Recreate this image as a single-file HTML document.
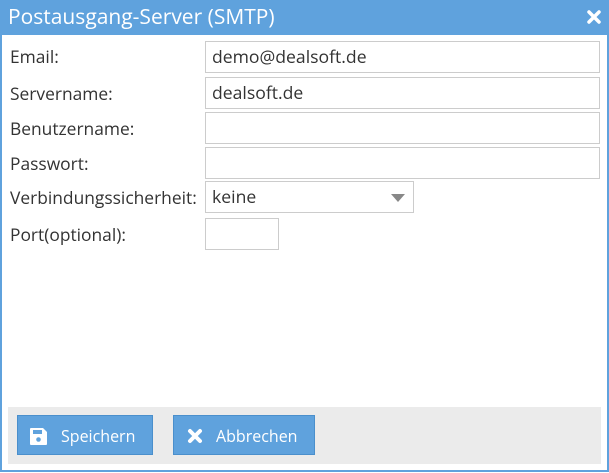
<!DOCTYPE html>
<html><head><style>
body{margin:0;width:609px;height:473px;overflow:hidden;font-family:"Open Sans","Liberation Sans",sans-serif;background:#fff}
.win{position:absolute;left:0;top:0;width:605px;height:470px;border:2px solid #5fa2dd;border-top:0;background:#fff}
.hd{position:absolute;left:0;top:0;width:609px;height:35px;background:#5fa2dd;color:#fff;font-size:21px;line-height:35px}
.hd span{position:absolute;left:8px;top:0}
.x{position:absolute;right:7px;top:9px}
.lb{position:absolute;left:10px;font-size:17.4px;color:#333}
.in{position:absolute;left:205px;width:393px;height:30px;border:1px solid #ccc;box-sizing:content-box;font-size:17.6px;color:#333;line-height:30px;text-indent:6px}
.ft{position:absolute;left:8px;top:407px;width:593px;height:57px;background:#ebebeb}
.bt{position:absolute;top:415px;height:40px;background:#5fa2dd;border:1px solid #4a8fcc;color:#fff;font-size:16px;line-height:40px;box-sizing:border-box}
</style></head><body>
<div class="win"></div>
<div class="hd"><span>Postausgang-Server (SMTP)</span>
<svg class="x" width="16" height="16" viewBox="0 0 16 16"><path d="M3 3L13 13M13 3L3 13" stroke="#fff" stroke-width="3.5" stroke-linecap="round"/></svg></div>
<div class="lb" style="top:45px">Email:</div><div class="in" style="top:41px">demo@dealsoft.de</div>
<div class="lb" style="top:82px">Servername:</div><div class="in" style="top:77px">dealsoft.de</div>
<div class="lb" style="top:117px">Benutzername:</div><div class="in" style="top:112px"></div>
<div class="lb" style="top:152px">Passwort:</div><div class="in" style="top:147px"></div>
<div class="lb" style="top:186px">Verbindungssicherheit:</div><div class="in" style="top:181px;width:207px">keine
<svg style="position:absolute;right:8px;top:12px" width="14" height="8"><path d="M0 0H14L7 8Z" fill="#888"/></svg></div>
<div class="lb" style="top:223px">Port(optional):</div><div class="in" style="top:218px;width:72px"></div>
<div class="ft"></div>
<div class="bt" style="left:17px;width:136px">
<svg style="position:absolute;left:11px;top:11px" width="19" height="19" viewBox="0 0 19 19"><path d="M1 2Q1 1 2 1H14L18 5V17Q18 18 17 18H2Q1 18 1 17Z" fill="#fff"/><rect x="4" y="3" width="9" height="4" fill="#5fa2dd"/><circle cx="9.5" cy="12.5" r="2.3" fill="#5fa2dd"/></svg>
<span style="position:absolute;left:43px">Speichern</span></div>
<div class="bt" style="left:173px;width:142px">
<svg style="position:absolute;left:13px;top:12px" width="16" height="16" viewBox="0 0 16 16"><path d="M3 3L13 13M13 3L3 13" stroke="#fff" stroke-width="4" stroke-linecap="round"/></svg>
<span style="position:absolute;left:42px">Abbrechen</span></div>
</body></html>
